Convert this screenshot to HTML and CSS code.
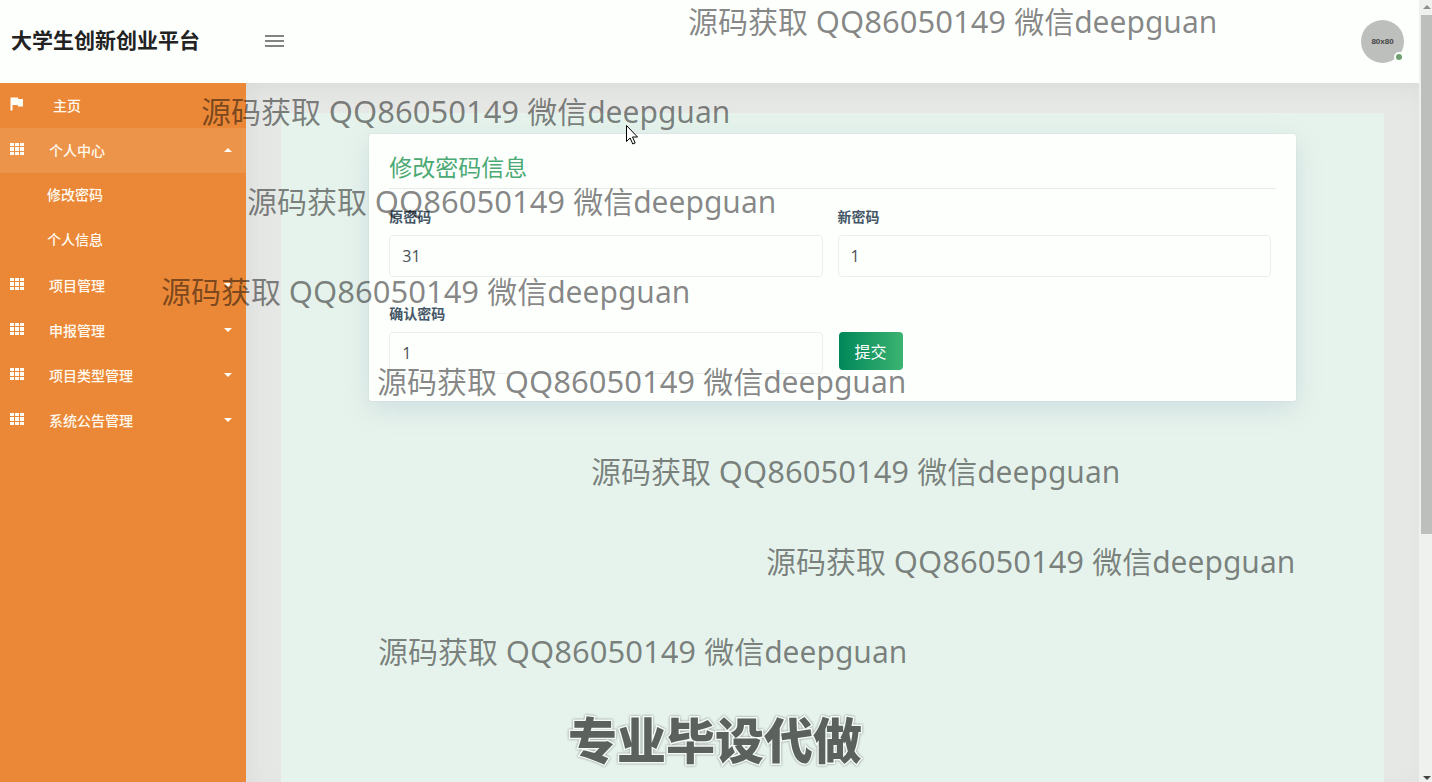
FILE: index.html
```
<!DOCTYPE html>
<html lang="zh-CN">
<head>
    <meta charset="UTF-8">
    <meta name="viewport" content="width=device-width, initial-scale=1.0">
    <title>大学生创新创业平台</title>
    <link rel="stylesheet" href="styles.css">
</head>
<body>

<!-- Shared icons -->
<svg class="sprite" aria-hidden="true">
    <symbol id="flag" viewBox="0 0 14 14"><path d="M.5.500h7.500l.5 1.500h4.500v7.500H8L7.500 8H2.500v5.500h-2z"/></symbol>
    <symbol id="grid" viewBox="0 0 14 12"><path d="M0 0h4v3H0zM5 0h4v3H5zM10 0h4v3h-4zM0 4h4v4H0zM5 4h4v4H5zM10 4h4v4h-4zM0 9h4v3H0zM5 9h4v3H5zM10 9h4v3h-4z"/></symbol>
</svg>

<div class="page">
    <header class="header">
        <a class="brand" href="#">大学生创新创业平台</a>
        <button class="menu-toggle" type="button" aria-label="菜单"><span></span><span></span><span></span></button>
        <a class="avatar" href="#">80x80<span class="status"></span></a>
    </header>

    <div class="body">
        <nav class="sidebar">
            <a class="nav-item home" href="#"><svg class="icon flag"><use href="#flag"/></svg>主页</a>
            <a class="nav-item active" href="#"><svg class="icon"><use href="#grid"/></svg>个人中心<span class="caret up"></span></a>
            <a class="nav-item sub" href="#">修改密码</a>
            <a class="nav-item sub" href="#">个人信息</a>
            <a class="nav-item" href="#"><svg class="icon"><use href="#grid"/></svg>项目管理<span class="caret"></span></a>
            <a class="nav-item" href="#"><svg class="icon"><use href="#grid"/></svg>申报管理<span class="caret"></span></a>
            <a class="nav-item" href="#"><svg class="icon"><use href="#grid"/></svg>项目类型管理<span class="caret"></span></a>
            <a class="nav-item" href="#"><svg class="icon"><use href="#grid"/></svg>系统公告管理<span class="caret"></span></a>
        </nav>

        <main class="main">
            <div class="content">
                <section class="card">
                    <h3>修改密码信息</h3>
                    <form class="form">
                        <div class="field">
                            <label for="oldPassword">原密码</label>
                            <input type="text" id="oldPassword" value="31">
                        </div>
                        <div class="field">
                            <label for="newPassword">新密码</label>
                            <input type="text" id="newPassword" value="1">
                        </div>
                        <div class="field">
                            <label for="confirmPassword">确认密码</label>
                            <input type="text" id="confirmPassword" value="1">
                        </div>
                        <div class="actions">
                            <button class="submit" type="button">提交</button>
                        </div>
                    </form>
                </section>
            </div>
        </main>
    </div>
</div>

<div class="scrollbar">
    <span class="arrow"></span>
    <span class="thumb"></span>
    <span class="arrow down"></span>
</div>

<!-- Text floating over the page -->
<div class="overlay">
    <span class="mark mark-1">源码获取 <span class="number">QQ86050149 </span>微信deepguan</span>
    <span class="mark mark-2">源码获取 <span class="number">QQ86050149 </span>微信deepguan</span>
    <span class="mark mark-3">源码获取 <span class="number">QQ86050149 </span>微信deepguan</span>
    <span class="mark mark-4">源码获取 <span class="number">QQ86050149 </span>微信deepguan</span>
    <span class="mark mark-5">源码获取 <span class="number">QQ86050149 </span>微信deepguan</span>
    <span class="mark mark-6">源码获取 <span class="number">QQ86050149 </span>微信deepguan</span>
    <span class="mark mark-7">源码获取 <span class="number">QQ86050149 </span>微信deepguan</span>
    <span class="mark mark-8">源码获取 <span class="number">QQ86050149 </span>微信deepguan</span>
    <span class="slogan">专业毕设代做</span>
    <svg class="cursor" viewBox="0 0 12 20"><path d="M.5.500v16l3.600-3.500 2.700 6 2.400-1-2.700-6h5z" fill="#fff" stroke="#000"/></svg>
</div>

</body>
</html>
```
FILE: styles.css
```
* {
    box-sizing: border-box;
}

body {
    margin: 0;
    height: 100vh;
    overflow: hidden;
    display: flex;
    position: relative;
    font-family: "Open Sans", "Noto Sans CJK SC", sans-serif;
    font-size: 14px;
    background-color: #fdfffd;
}

a {
    color: inherit;
    text-decoration: none;
}

.sprite {
    position: absolute;
    width: 0;
    height: 0;
}

.page {
    flex: 1;
    display: flex;
    flex-direction: column;
    min-width: 0;
}

/* Header */
.header {
    display: flex;
    align-items: center;
    height: 83px;
    padding: 0 15px 0 11px;
    background-color: #fdfffd;
}

.brand {
    width: 254px;
    padding-bottom: 5px;
    font-size: 21px;
    font-weight: 700;
    color: #222;
}

.menu-toggle {
    display: flex;
    flex-direction: column;
    gap: 3px;
    padding: 0 0 2px;
    border: 0;
    background: none;
}

.menu-toggle span {
    width: 19px;
    height: 2px;
    background-color: #828482;
}

.avatar {
    position: relative;
    display: flex;
    align-items: center;
    justify-content: center;
    width: 43px;
    height: 43px;
    margin-left: auto;
    border-radius: 50%;
    background-color: #bdbfbd;
    color: #444;
    font-family: "Liberation Sans Narrow", "Liberation Sans", sans-serif;
    font-size: 8px;
    font-weight: 700;
}

.status {
    position: absolute;
    right: 0;
    bottom: 1px;
    width: 10px;
    height: 10px;
    border: 2px solid #fdfffd;
    border-radius: 50%;
    background-color: #6fa06f;
}

.body {
    flex: 1;
    display: flex;
}

/* Sidebar */
.sidebar {
    width: 246px;
    background-color: #eb8837;
    color: #fffaf0;
    font-weight: 500;
}

.nav-item {
    display: flex;
    align-items: center;
    height: 45px;
    padding: 0 14px 2px 10px;
}

.nav-item.active {
    background-color: #ed944b;
}

.nav-item.sub {
    padding-left: 47px;
    padding-bottom: 4px;
}

.icon {
    width: 14px;
    height: 12px;
    margin: 0 25px 2px 0;
    fill: #fffdf8;
}

.icon.flag {
    height: 14px;
    margin-right: 29px;
}

.caret {
    margin-left: auto;
    border: 4px solid transparent;
    border-top: 4px solid #fffdf8;
    border-bottom: 0;
}

.caret.up {
    border-top: 0;
    border-bottom: 4px solid #fffdf8;
}

/* Content */
.main {
    flex: 1;
    padding: 30px 35px 0;
    background-color: #e6e8e5;
    box-shadow: inset 0 14px 28px -14px #d6d8d6, inset 14px 0 28px -14px #dadcda;
}

.content {
    height: 100%;
    padding: 21px 8% 0;
    background-color: #e6f3ec;
}

.card {
    padding: 20px 20px 27px;
    border-radius: 2px;
    background-color: #fdfffd;
    box-shadow: 0 0 1px #a9bcb8, 0 8px 24px rgba(140, 160, 195, 0.25);
}

.card h3 {
    margin: 0 0 18px;
    padding-bottom: 7px;
    border-bottom: 1px solid #e6ebe8;
    color: #4ba974;
    font-size: 23px;
    font-weight: 400;
    line-height: 27px;
}

.form {
    display: grid;
    grid-template-columns: 1fr 1fr;
    gap: 27px 15px;
    padding-right: 5px;
}

.field {
    display: flex;
    flex-direction: column;
    gap: 8px;
}

.field label {
    color: #455666;
    font-weight: 700;
    line-height: 20px;
}

.field input {
    width: 100%;
    height: 42px;
    padding: 0 12px;
    border: 1px solid #eceeec;
    border-radius: 4px;
    background-color: #fdfffd;
    color: #495057;
    font: inherit;
    font-size: 16px;
}

.actions {
    padding-top: 28px;
}

.submit {
    width: 64px;
    height: 38px;
    margin-left: 1px;
    padding: 0;
    border: 0;
    border-radius: 4px;
    background: linear-gradient(to right, #00875a, #3cb371);
    color: #fff;
    font: inherit;
    font-size: 16px;
}

/* Scrollbar */
.scrollbar {
    display: flex;
    flex-direction: column;
    align-items: center;
    width: 13px;
    padding: 5px 0 2px 2px;
    background-color: #eff1ef;
}

.arrow {
    border: 4px solid transparent;
    border-top: 0;
    border-bottom: 4px solid #8c8e8c;
}

.arrow.down {
    margin-top: auto;
    border-top: 4px solid #444;
    border-bottom: 0;
}

.thumb {
    width: 100%;
    height: 67%;
    margin-top: 6px;
    background-color: #bdbfbd;
}

/* Overlay */
.overlay {
    position: absolute;
    inset: 0;
    pointer-events: none;
}

.mark,
.slogan,
.cursor {
    position: absolute;
    white-space: nowrap;
}

.mark {
    color: rgba(0, 0, 0, 0.48);
    font-family: "Noto Sans", "Noto Sans CJK SC", sans-serif;
    font-size: 30px;
    line-height: 40px;
}

.mark .number {
    font-size: 31px;
}

.mark-1 { left: 688px; top: 1px; }
.mark-2 { left: 201px; top: 91px; }
.mark-3 { left: 247px; top: 181px; }
.mark-4 { left: 161px; top: 271px; }
.mark-5 { left: 377px; top: 361px; }
.mark-6 { left: 591px; top: 451px; }
.mark-7 { left: 766px; top: 541px; }
.mark-8 { left: 378px; top: 631px; }

.slogan {
    left: 568px;
    top: 708px;
    color: #5b625d;
    font-family: "Noto Sans CJK SC", sans-serif;
    font-size: 49px;
    font-weight: 900;
    line-height: 60px;
    -webkit-text-stroke: 3px #f4fbf7;
    paint-order: stroke fill;
    filter: drop-shadow(0 0 1px #7d857f);
}

.cursor {
    left: 626px;
    top: 125px;
    width: 12px;
    height: 20px;
}
```
